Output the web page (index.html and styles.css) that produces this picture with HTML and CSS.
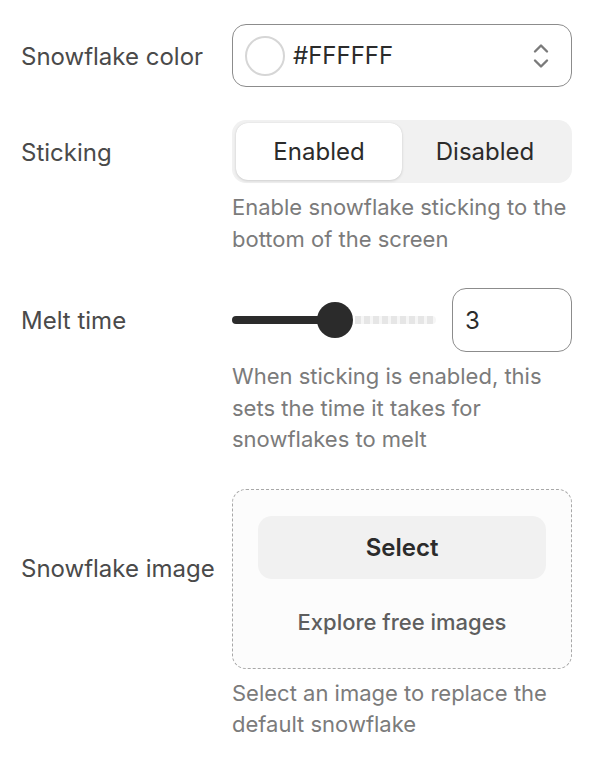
FILE: index.html
```html
<!DOCTYPE html>
<html>
<head>
<meta charset="utf-8">
<link rel="stylesheet" href="styles.css">
</head>
<body>
<div class="form">
  <div class="label">Snowflake color</div>
  <div class="control">
    <div class="field color-field">
      <span class="swatch"></span>
      <span class="value">#FFFFFF</span>
      <svg class="chev" width="16" height="26" viewBox="0 0 16 26"><path d="M2 8.5 L8 2.5 L14 8.5 M2 17.5 L8 23.5 L14 17.5" fill="none" stroke="#7a7a7a" stroke-width="2.4" stroke-linecap="round" stroke-linejoin="round"/></svg>
    </div>
  </div>

  <div class="label">Sticking</div>
  <div class="control">
    <div class="segmented">
      <div class="seg active">Enabled</div>
      <div class="seg">Disabled</div>
    </div>
    <p class="desc">Enable snowflake sticking to the bottom of the screen</p>
  </div>

  <div class="label">Melt time</div>
  <div class="control">
    <div class="slider-row">
      <div class="slider">
        <div class="fill"></div>
        <div class="thumb"></div>
        <div class="rest"></div>
      </div>
      <div class="field num-field">3</div>
    </div>
    <p class="desc">When sticking is enabled, this sets the time it takes for snowflakes to melt</p>
  </div>

  <div class="label label-image">Snowflake image</div>
  <div class="control">
    <div class="dropzone">
      <div class="select-btn">Select</div>
      <div class="explore">Explore free images</div>
    </div>
    <p class="desc">Select an image to replace the default snowflake</p>
  </div>
</div>
</body>
</html>
```

FILE: styles.css
```css
* { box-sizing: border-box; }
html, body { margin: 0; background: #fff; }
body {
  font-family: Inter, "Noto Sans", sans-serif;
  color: #2b2b2b;
}
.form {
  display: grid;
  grid-template-columns: 211px 340px;
  padding: 24px 0 0 21px;
  row-gap: 33px;
}
.label {
  font-size: 24px;
  color: #4a4a4a;
  height: 63px;
  padding-top: 2px;
  display: flex;
  align-items: center;
}
.label-image {
  height: auto;
  align-self: center;
  margin-top: -92px;
  padding-top: 0;
}
.control { display: flex; flex-direction: column; }
.field {
  border: 1px solid #8c8c8c;
  border-radius: 14px;
  height: 63px;
  display: flex;
  align-items: center;
  font-size: 24px;
  color: #2b2b2b;
}
.color-field { padding: 0 22px 0 12px; }
.swatch {
  width: 40px;
  height: 40px;
  border-radius: 50%;
  border: 2px solid #d6d6d6;
  background: #fff;
  margin-right: 8px;
}
.value { flex: 1; }
.chev { display: block; }
.segmented {
  background: #f1f1f1;
  border-radius: 14px;
  height: 63px;
  padding: 3px 4px;
  display: flex;
}
.seg {
  flex: 1;
  display: flex;
  align-items: center;
  justify-content: center;
  font-size: 24px;
  color: #2b2b2b;
  border-radius: 12px;
}
.seg.active {
  background: #fff;
  box-shadow: 0 1px 3px rgba(0,0,0,0.14), 0 0 1px rgba(0,0,0,0.1);
}
.desc {
  margin: 9px 0 0;
  font-size: 22px;
  line-height: 31.5px;
  color: #7b7b7b;
}
.slider-row {
  display: flex;
  align-items: center;
  gap: 16px;
}
.slider {
  width: 204px;
  height: 36px;
  display: flex;
  align-items: center;
}
.fill {
  width: 89px;
  height: 8px;
  background: #2b2b2b;
  border-radius: 4px 0 0 4px;
}
.thumb {
  width: 36px;
  height: 36px;
  border-radius: 50%;
  background: #2b2b2b;
  margin-left: -4px;
}
.rest {
  flex: 1;
  height: 8px;
  margin-left: 2px;
  border-radius: 0 4px 4px 0;
  background: repeating-linear-gradient(90deg, #e6e6e6 0 6px, #f6f6f6 6px 9px);
}
.num-field {
  width: 120px;
  height: 64px;
  padding-left: 12px;
}
.dropzone {
  border: 1px dashed #a8a8a8;
  border-radius: 14px;
  background: #fcfcfc;
  height: 180px;
  padding: 26px 25px 0;
  display: flex;
  flex-direction: column;
}
.select-btn {
  height: 63px;
  background: #f1f1f1;
  border-radius: 14px;
  display: flex;
  align-items: center;
  justify-content: center;
  font-size: 24px;
  font-weight: 600;
  color: #2b2b2b;
}
.explore {
  margin-top: 30px;
  text-align: center;
  font-size: 22px;
  font-weight: 500;
  color: #5e5e5e;
}
```
